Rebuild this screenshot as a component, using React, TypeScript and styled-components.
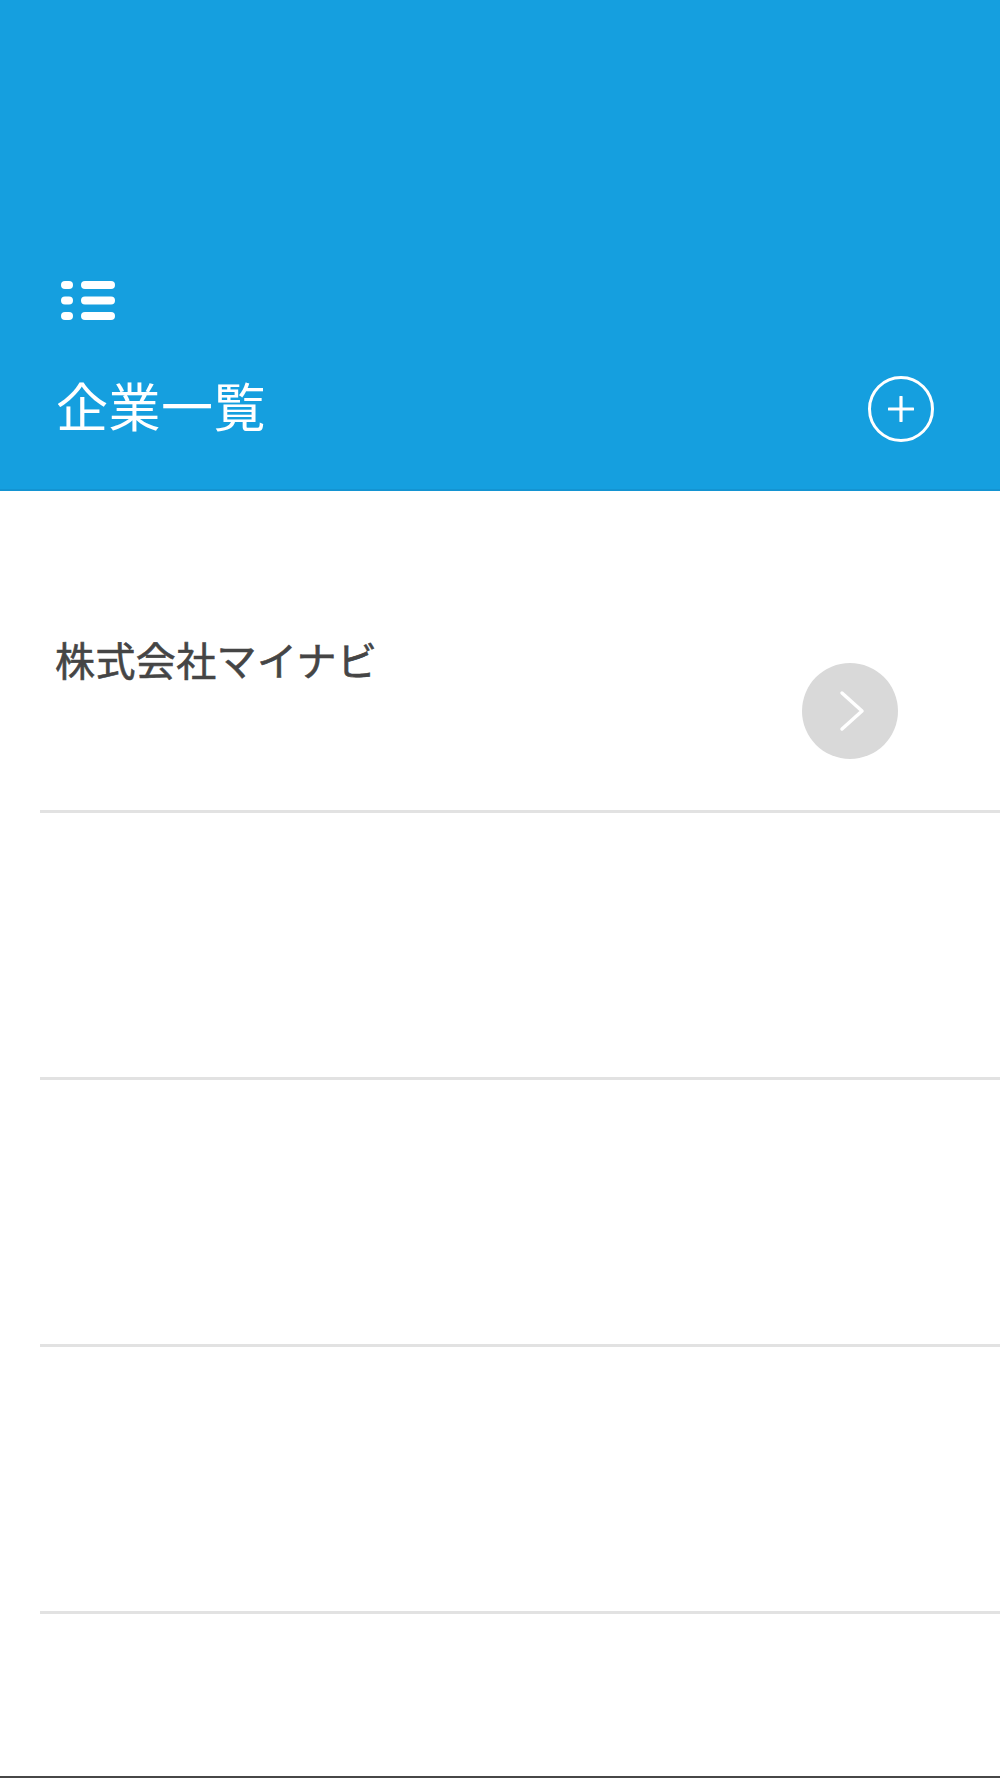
import React from 'react';
import styled, { createGlobalStyle } from 'styled-components';

const GlobalStyle = createGlobalStyle`
    html, body {
        margin: 0;
        padding: 0;
        background: #ffffff;
    }
    * {
        box-sizing: border-box;
    }
    body {
        font-family: "Noto Sans CJK JP", "Noto Sans", sans-serif;
    }
`;

const Page = styled.div`
    height: 1778px;
    border-bottom: 2px solid #474747;
    background: #ffffff;
    overflow: hidden;
`;

const Header = styled.header`
    height: 491px;
    background-color: #159fdf;
    border-bottom: 2px solid #1394d2;
    display: flex;
    flex-direction: column;
    justify-content: flex-end;
    padding: 0 66px 47px 56px;
`;

const MenuButton = styled.button`
    width: 54px;
    height: 39px;
    margin: 0 0 52px 5px;
    padding: 0;
    border: none;
    background: none;
    display: flex;
    cursor: pointer;
`;

const TitleRow = styled.div`
    display: flex;
    align-items: flex-start;
    justify-content: space-between;
    height: 70px;
`;

const Title = styled.h1`
    margin: 0;
    font-size: 52px;
    line-height: 66px;
    font-weight: 400;
    color: #ffffff;
    letter-spacing: 0.5px;
`;

const AddButton = styled.button`
    width: 66px;
    height: 66px;
    margin-top: 4px;
    border: 3px solid #ffffff;
    border-radius: 50%;
    background: none;
    padding: 0;
    display: flex;
    align-items: center;
    justify-content: center;
    cursor: pointer;
`;

const List = styled.ul`
    list-style: none;
    margin: 0;
    padding: 55px 0 0 0;
`;

const Row = styled.li`
    height: 267px;
    margin-left: 40px;
    border-bottom: 3px solid #e2e2e2;
    display: flex;
    align-items: flex-start;
    justify-content: space-between;
    padding: 89px 102px 0 15px;
`;

const CompanyName = styled.span`
    font-size: 40px;
    line-height: 48px;
    font-weight: 400;
    color: #454545;
    letter-spacing: 0.4px;
    -webkit-text-stroke: 0.6px #454545;
`;

const DetailButton = styled.button`
    width: 96px;
    height: 96px;
    margin-top: 28px;
    border: none;
    border-radius: 50%;
    background-color: #d9d9d9;
    padding: 0;
    display: flex;
    align-items: center;
    justify-content: center;
    cursor: pointer;
`;

function ListIcon() {
    return (
        <svg width="54" height="39" viewBox="0 0 54 39">
            {[0, 15.5, 31].map((y) => (
                <g key={y} fill="#ffffff">
                    <rect x="0" y={y} width="12" height="8" rx="4" />
                    <rect x="20" y={y} width="34" height="8" rx="4" />
                </g>
            ))}
        </svg>
    );
}

function PlusIcon() {
    return (
        <svg width="26" height="26" viewBox="0 0 26 26">
            <path d="M13 1v24M1 13h24" stroke="#ffffff" strokeWidth="3.2" strokeLinecap="round" />
        </svg>
    );
}

function ChevronIcon() {
    return (
        <svg width="96" height="96" viewBox="0 0 96 96">
            <path d="M40 30l20 18-20 18" fill="none" stroke="#ffffff" strokeWidth="3.5" strokeLinecap="round" strokeLinejoin="round" />
        </svg>
    );
}

const companies = ['株式会社マイナビ', '', '', ''];

function App() {
    return (
        <Page>
            <GlobalStyle />
            <Header>
                <MenuButton aria-label="menu">
                    <ListIcon />
                </MenuButton>
                <TitleRow>
                    <Title>企業一覧</Title>
                    <AddButton aria-label="add">
                        <PlusIcon />
                    </AddButton>
                </TitleRow>
            </Header>
            <List>
                {companies.map((name, i) => (
                    <Row key={i}>
                        <CompanyName>{name}</CompanyName>
                        {name && (
                            <DetailButton aria-label="detail">
                                <ChevronIcon />
                            </DetailButton>
                        )}
                    </Row>
                ))}
            </List>
        </Page>
    );
}

export default App;
